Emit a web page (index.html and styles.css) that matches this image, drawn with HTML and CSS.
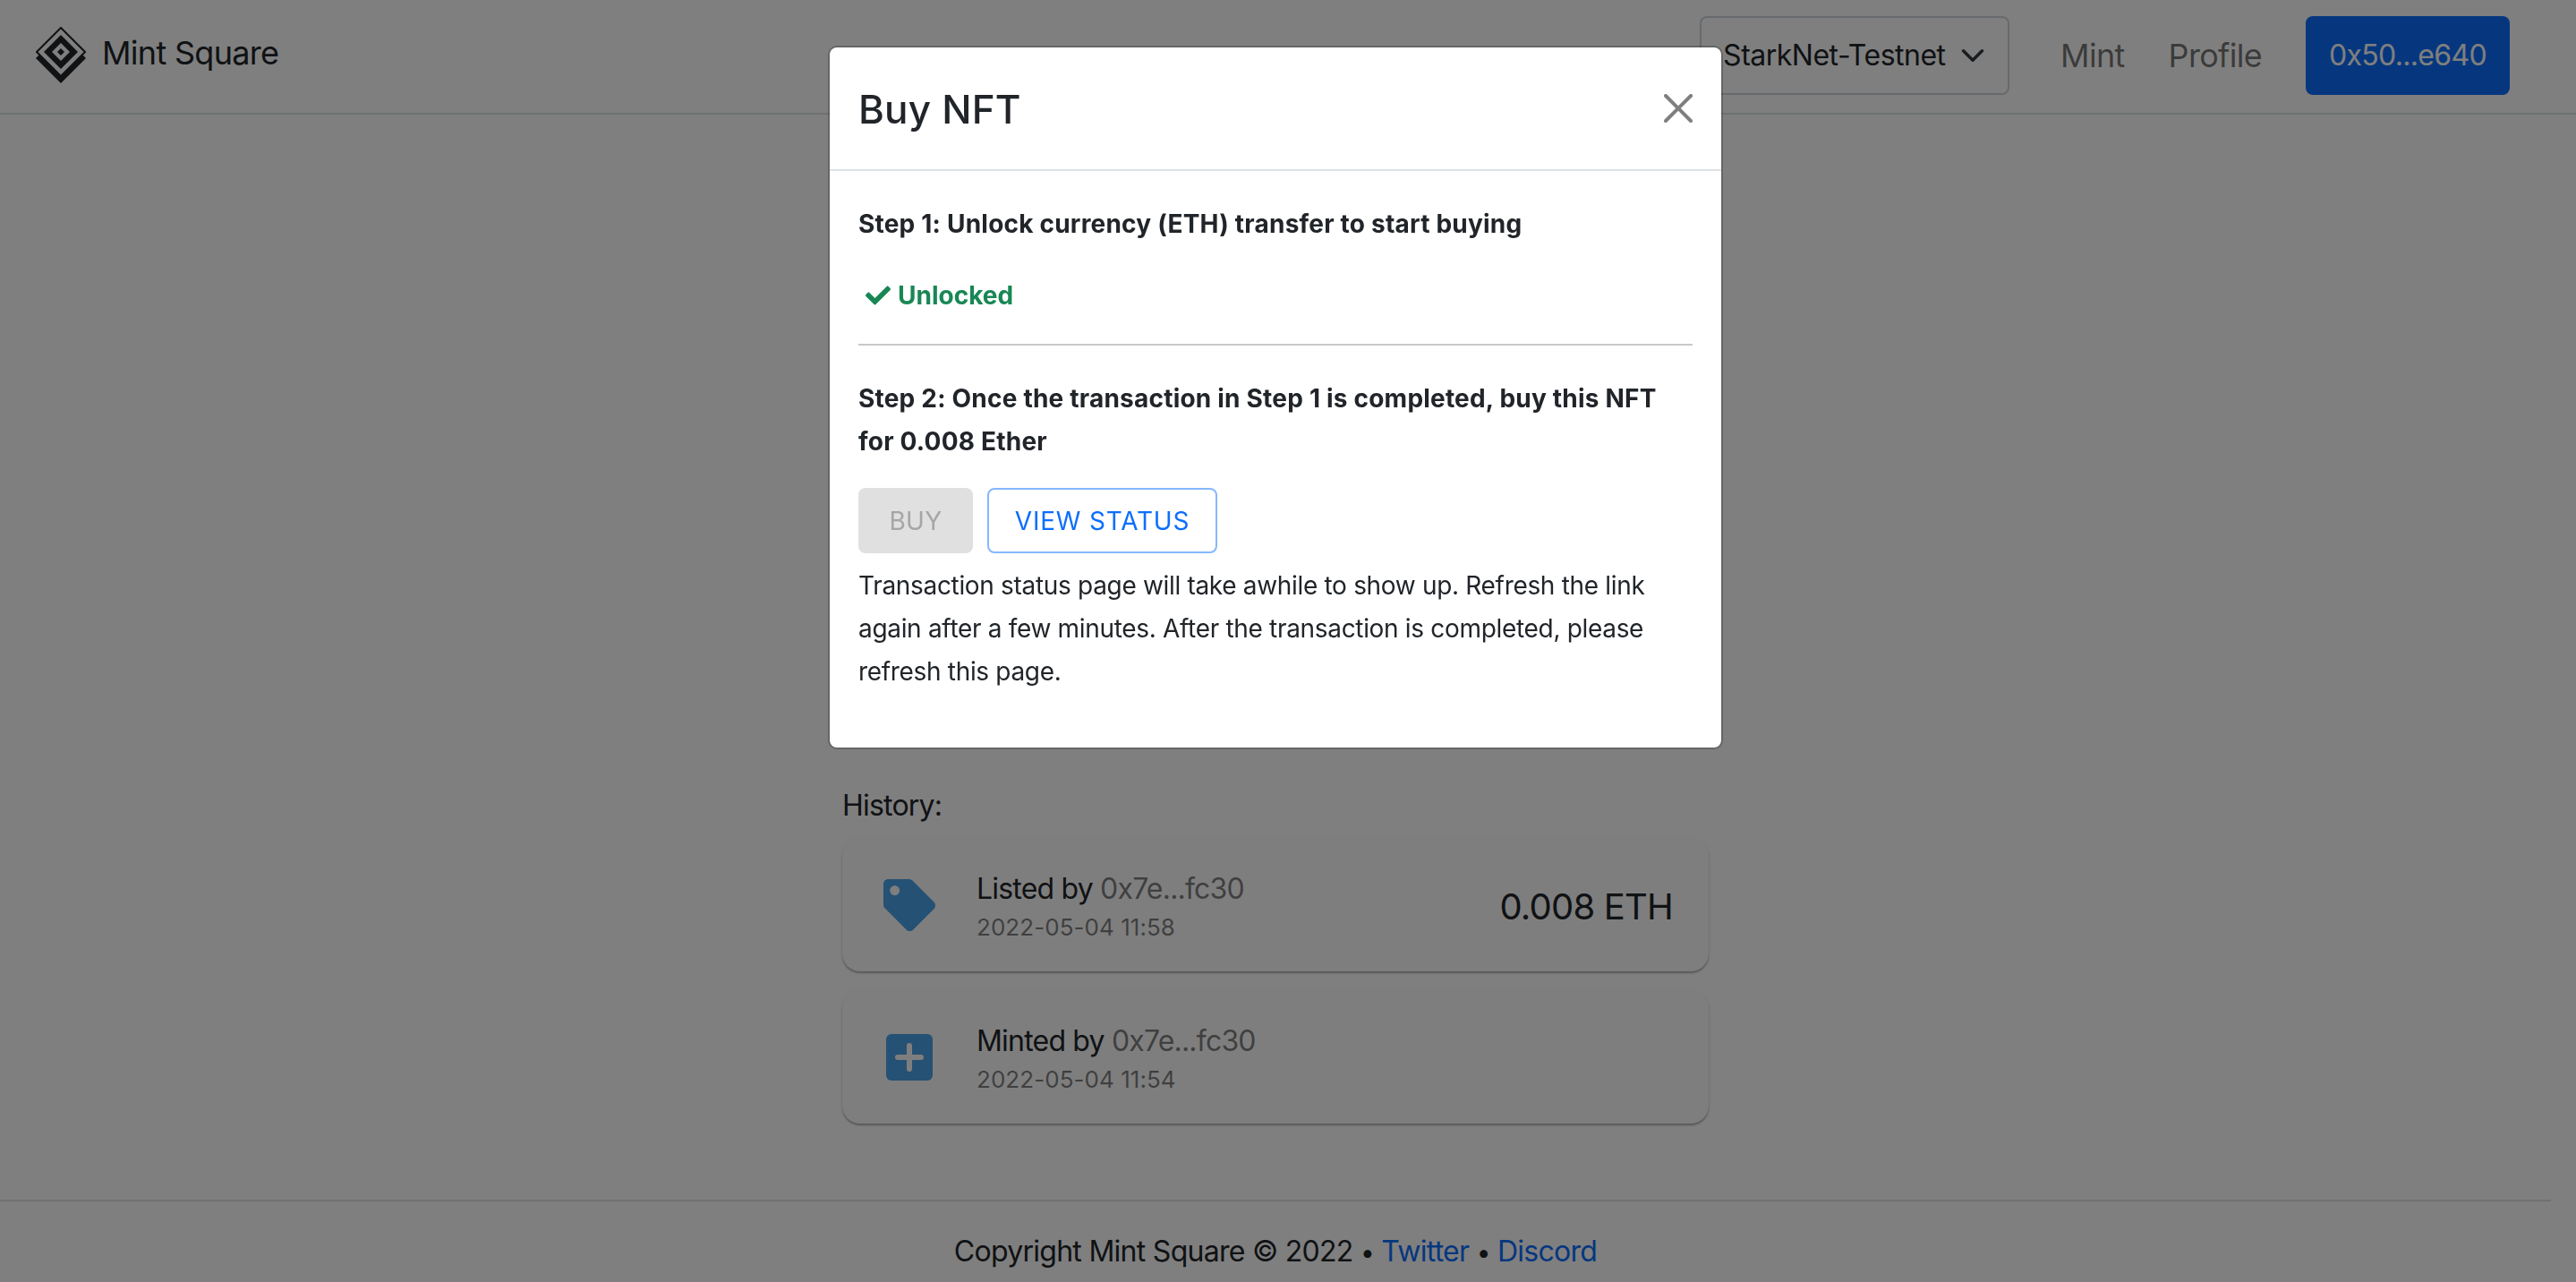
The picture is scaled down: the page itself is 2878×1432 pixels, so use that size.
FILE: index.html
```html
<!DOCTYPE html>
<html>
<head>
    <meta charset="utf-8">
    <title>Mint Square</title>
    <link rel="stylesheet" href="styles.css">
</head>

<body>

    <header class="topbar">
        <a class="brand">
            <svg class="brand-logo" viewBox="0 0 56 63">
                <path fill="#212529" d="M28 7 56 35 28 63 0 35z"/>
                <path fill="#fff" stroke="#212529" stroke-width="2" d="M28 1 55 28 28 55 1 28z"/>
                <path fill="#212529" d="M28 9 47 28 28 47 9 28z"/>
                <path fill="#fff" d="M28 18 38 28 28 38 18 28z"/>
                <path fill="#212529" d="M28 24 32 28 28 32 24 28z"/>
            </svg>
            <span class="brand-name">Mint Square</span>
        </a>
        <nav class="topnav">
            <div class="network">
                <span>StarkNet-Testnet</span>
                <svg class="network-caret" viewBox="0 0 16 16"><path fill="none" stroke="#343a40" stroke-width="2" stroke-linecap="round" stroke-linejoin="round" d="m2 5 6 6 6-6"/></svg>
            </div>
            <a class="nav-link">Mint</a>
            <a class="nav-link">Profile</a>
            <button class="wallet">0x50...e640</button>
        </nav>
    </header>

    <main class="content">
        <p class="history-title">History:</p>

        <div class="event">
            <svg class="event-icon" viewBox="0 0 512 512"><path d="M0 252.118V48C0 21.49 21.49 0 48 0h204.118a48 48 0 0 1 33.941 14.059l211.882 211.882c18.745 18.745 18.745 49.137 0 67.882L293.823 497.941c-18.745 18.745-49.137 18.745-67.882 0L14.059 286.059A48 48 0 0 1 0 252.118zM112 64c-26.51 0-48 21.49-48 48s21.49 48 48 48 48-21.49 48-48-21.49-48-48-48z"/></svg>
            <div class="event-text">
                <div class="event-who">Listed by <span class="muted">0x7e...fc30</span></div>
                <div class="event-date">2022-05-04 11:58</div>
            </div>
            <div class="event-price">0.008 ETH</div>
        </div>

        <div class="event">
            <svg class="event-icon" viewBox="0 0 58 58">
                <rect x="3" y="3" width="52" height="52" rx="6"/>
                <path class="event-plus" d="M29 16v26M16 29h26"/>
            </svg>
            <div class="event-text">
                <div class="event-who">Minted by <span class="muted">0x7e...fc30</span></div>
                <div class="event-date">2022-05-04 11:54</div>
            </div>
        </div>
    </main>

    <footer class="footer">
        Copyright Mint Square © 2022 <span class="dot">•</span> <a>Twitter</a> <span class="dot">•</span> <a>Discord</a>
    </footer>

    <div class="backdrop"></div>

    <div class="modal">
        <div class="modal-header">
            <h2>Buy NFT</h2>
            <svg class="modal-close" viewBox="0 0 16 16"><path d="M.293.293a1 1 0 0 1 1.414 0L8 6.586 14.293.293a1 1 0 1 1 1.414 1.414L9.414 8l6.293 6.293a1 1 0 0 1-1.414 1.414L8 9.414l-6.293 6.293a1 1 0 0 1-1.414-1.414L6.586 8 .293 1.707a1 1 0 0 1 0-1.414z"/></svg>
        </div>
        <div class="modal-body">
            <p class="step">Step 1: Unlock currency (ETH) transfer to start buying</p>
            <div class="unlocked">
                <svg viewBox="0 0 512 512"><path d="M173.898 439.404l-166.4-166.4c-9.997-9.997-9.997-26.206 0-36.204l36.203-36.204c9.997-9.998 26.207-9.998 36.204 0L192 312.69 432.095 72.596c9.997-9.997 26.207-9.997 36.204 0l36.203 36.204c9.997 9.997 9.997 26.206 0 36.204l-294.4 294.401c-9.998 9.997-26.207 9.997-36.204-.001z"/></svg>
                <span>Unlocked</span>
            </div>
            <hr class="divider">
            <p class="step">Step 2: Once the transaction in Step 1 is completed, buy this NFT for 0.008 Ether</p>
            <div class="actions">
                <button class="btn btn-disabled">BUY</button>
                <button class="btn btn-outline">VIEW STATUS</button>
            </div>
            <p class="note">Transaction status page will take awhile to show up. Refresh the link again after a few minutes. After the transaction is completed, please refresh this page.</p>
        </div>
    </div>

</body>

</html>
```

FILE: styles.css
```css
* {
    box-sizing: border-box;
}

html,
body {
    height: 100%;
}

body {
    margin: 0;
    overflow: hidden;
    background-color: #fff;
    color: #212529;
    font-family: Inter, "Liberation Sans", sans-serif;
    font-size: 32px;
    line-height: 48px;
    letter-spacing: -0.8px;
}

button {
    font-family: inherit;
}

/* top bar */
.topbar {
    display: flex;
    align-items: center;
    justify-content: space-between;
    height: 128px;
    padding: 0 74px 3px 40px;
    border-bottom: 2px solid #dee2e6;
}

.brand {
    display: flex;
    align-items: center;
    gap: 18px;
    font-size: 36px;
    letter-spacing: -0.7px;
}

.brand-logo {
    width: 56px;
    height: 63px;
}

.brand-name {
    margin-bottom: 6px;
}

.topnav {
    display: flex;
    align-items: center;
}

.network {
    display: flex;
    flex: none;
    align-items: center;
    justify-content: space-between;
    width: 346px;
    height: 88px;
    margin-right: 57px;
    padding: 0 25px 0 24px;
    border: 2px solid #ced4da;
    border-radius: 8px;
    font-size: 32px;
    letter-spacing: -0.5px;
    white-space: nowrap;
}

.network-caret {
    flex: none;
    width: 28px;
    height: 28px;
}

.nav-link {
    margin-right: 49px;
    color: rgba(0, 0, 0, 0.55);
    font-size: 36px;
    letter-spacing: -0.7px;
}

.wallet {
    width: 228px;
    height: 88px;
    border: none;
    border-radius: 8px;
    background-color: #0d6efd;
    color: #fff;
    font-size: 32px;
    letter-spacing: -0.7px;
}

/* history */
.content {
    width: 968px;
    margin-left: 941px;
    padding-top: 748px;
}

.history-title {
    margin: 0 0 13px;
}

.event {
    display: flex;
    align-items: center;
    height: 148px;
    margin-bottom: 22px;
    padding: 0 40px 0 46px;
    border-radius: 20px;
    background-color: #fcfcfc;
    box-shadow: 0 2px 2px rgba(0, 0, 0, 0.3), 0 0 8px rgba(0, 0, 0, 0.04);
}

.event-icon {
    flex: none;
    width: 58px;
    height: 58px;
    margin-right: 46px;
    fill: #4aa3e8;
}

.event-plus {
    fill: none;
    stroke: #fcfcfc;
    stroke-width: 6;
    stroke-linecap: round;
}

.event-text {
    flex: 1;
    padding-top: 6px;
}

.event-who {
    line-height: 44px;
}

.event-date {
    color: rgba(0, 0, 0, 0.5);
    font-size: 26px;
    line-height: 42px;
    letter-spacing: 0.05px;
}

.muted {
    color: rgba(0, 0, 0, 0.5);
}

.event-price {
    padding-top: 4px;
    font-size: 40px;
    letter-spacing: -0.8px;
}

/* footer */
.footer {
    width: 2850px;
    margin-top: 85px;
    padding-top: 32px;
    border-top: 2px solid #dee2e6;
    text-align: center;
    letter-spacing: -0.72px;
}

.footer a {
    color: #0d6efd;
}

.dot {
    font-size: 28px;
}

/* modal */
.backdrop {
    position: fixed;
    top: 0;
    left: 0;
    width: 100%;
    height: 100%;
    background-color: rgba(0, 0, 0, 0.5);
}

.modal {
    position: fixed;
    top: 51px;
    left: 925px;
    width: 1000px;
    border: 2px solid rgba(0, 0, 0, 0.2);
    border-radius: 10px;
    background-color: #fff;
    background-clip: padding-box;
    font-size: 28px;
    letter-spacing: -0.32px;
}

.modal-header {
    display: flex;
    align-items: center;
    justify-content: space-between;
    height: 138px;
    padding: 0 32px;
    border-bottom: 2px solid #dee2e6;
}

.modal-header h2 {
    margin: 2px 0 0;
    font-size: 44px;
    font-weight: 500;
    letter-spacing: 0.2px;
}

.modal-close {
    width: 32px;
    height: 32px;
    fill: rgba(0, 0, 0, 0.5);
}

.modal-body {
    padding: 35px 32px 61px;
}

.step {
    margin: 0;
    font-weight: 700;
    letter-spacing: 0.21px;
}

.unlocked {
    display: flex;
    align-items: center;
    gap: 8px;
    margin: 32px 0 30px 8px;
    color: #198754;
    font-weight: 700;
    letter-spacing: 0;
}

.unlocked svg {
    width: 28px;
    height: 28px;
    fill: #198754;
}

.divider {
    height: 2px;
    margin: 0 0 35px;
    border: none;
    background-color: #c8c8c8;
}

.actions {
    display: flex;
    gap: 16px;
    margin: 28px 0 12px;
}

.btn {
    height: 73px;
    border-radius: 8px;
    font-size: 28px;
}

.btn-disabled {
    width: 128px;
    border: none;
    background-color: #e0e0e0;
    color: #a6a6a6;
    letter-spacing: 0.3px;
}

.btn-outline {
    width: 257px;
    border: 2px solid #86b7fe;
    background-color: #fff;
    color: #0d6efd;
    letter-spacing: 0.8px;
}

.note {
    margin: 0;
}
```
